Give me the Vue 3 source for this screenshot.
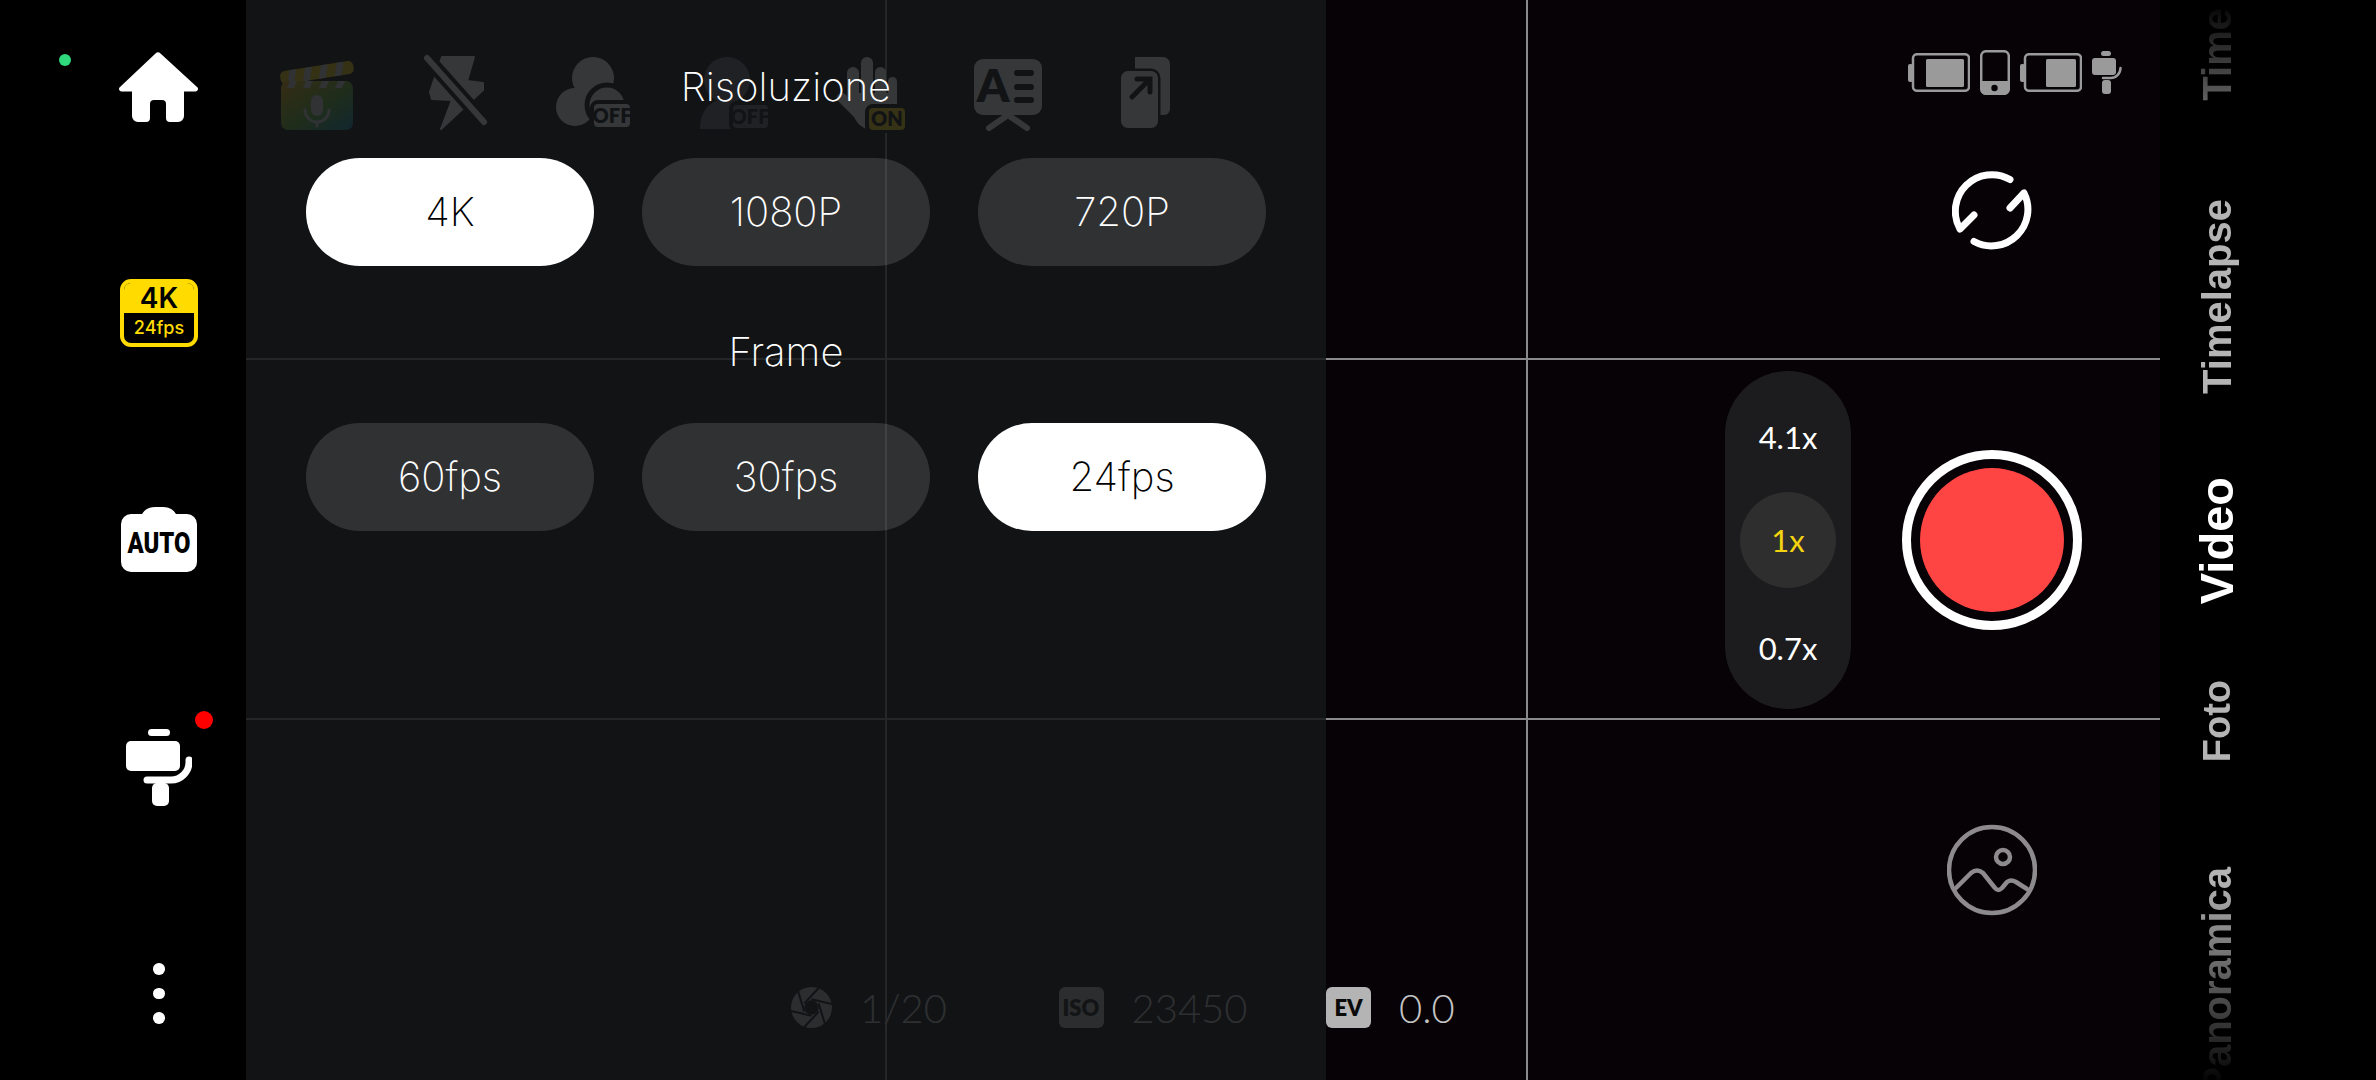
<template>
	<div class="camera">
		<aside class="left-rail">
			<span class="live-dot"></span>
			<svg class="home-icon" viewBox="0 0 80 70" width="80" height="70">
				<path fill="#fff" d="M36.5 1.5a3.5 3.5 0 0 1 5 0L78 35a2.5 2.5 0 0 1-1.6 4.5H65V64a6 6 0 0 1-6 6H51a4 4 0 0 1-4-4V52a4 4 0 0 0-4-4H35a4 4 0 0 0-4 4V66a4 4 0 0 1-4 4H19a6 6 0 0 1-6-6V39.5H2.6A2.5 2.5 0 0 1 1 35Z" />
			</svg>
			<div class="res-badge">
				<span class="res-badge-top">4K</span>
				<span class="res-badge-bottom">24fps</span>
			</div>
			<svg class="auto-icon" viewBox="0 0 76 68" width="76" height="68">
				<path fill="#fff" d="M20 12Q24 3 34 3H42Q52 3 56 12Z" />
				<rect x="0" y="10" width="76" height="58" rx="10" fill="#fff" />
				<text x="38" y="49" text-anchor="middle" textLength="63" lengthAdjust="spacingAndGlyphs" class="auto-text">AUTO</text>
			</svg>
			<div class="gimbal-wrap">
				<svg viewBox="0 0 66 77" width="66" height="77" fill="#fff">
					<rect x="22" y="0" width="22" height="7" rx="3.5" />
					<rect x="0" y="12" width="54" height="30" rx="5" />
					<path d="M63 31v2a18 18 0 0 1-18 18H21" fill="none" stroke="#fff" stroke-width="7" stroke-linecap="round" />
					<rect x="26" y="54" width="17" height="23" rx="5" />
				</svg>
				<span class="gimbal-dot"></span>
			</div>
			<div class="more-dots">
				<span></span><span></span><span></span>
			</div>
		</aside>

		<main class="viewfinder">
			<div class="thirds">
				<div v-for="n in 9" :key="n" class="third"></div>
			</div>

			<div class="stage">
				<div class="quick-row">
					<svg viewBox="0 0 80 80" width="80" height="80">
						<defs>
							<linearGradient id="clapFill" x1="0" y1="0" x2="1" y2="1">
								<stop offset="0" stop-color="#ffb300" />
								<stop offset="0.55" stop-color="#5fb52a" />
								<stop offset="1" stop-color="#0a8fb8" />
							</linearGradient>
						</defs>
						<g transform="rotate(-9 41 20)">
							<rect x="4" y="13" width="74" height="13" rx="5" fill="#ffd000" />
							<path v-for="x in [14, 30, 46, 62]" :key="x" :d="`M${x} 13h7l-4 13h-7Z`" fill="#d8d8d8" />
						</g>
						<rect x="5" y="28" width="72" height="49" rx="7" fill="url(#clapFill)" />
						<path v-for="x in [14, 30, 46, 62]" :key="x" :d="`M${x} 28h7l-3 7h-7Z`" fill="#d8d8d8" />
						<rect x="35" y="42" width="12" height="21" rx="6" fill="#d8d8d8" />
						<path d="M29 57a12 12 0 0 0 24 0M41 69v4" fill="none" stroke="#d8d8d8" stroke-width="3" stroke-linecap="round" />
					</svg>

					<svg viewBox="0 0 80 80" width="80" height="80">
						<path fill="#fff" d="M28 4H60L53 28L69 30V37L27 76L38 47L18 46L16 39Z" stroke="#fff" stroke-width="2" stroke-linejoin="round" />
						<path d="M13 5L70 69" stroke="#060206" stroke-width="14" />
						<path d="M13 5L70 69" stroke="#fff" stroke-width="6" stroke-linecap="round" />
					</svg>

					<svg viewBox="0 0 80 80" width="80" height="80" fill="#fff">
						<circle cx="41" cy="25" r="21" />
						<circle cx="23" cy="54" r="19" />
						<circle cx="55" cy="52" r="20" stroke="#060206" stroke-width="5" />
						<rect x="40" y="49" width="40" height="27" rx="6" stroke="#060206" stroke-width="4" />
						<text x="60" y="70" text-anchor="middle" class="tag-text">OFF</text>
					</svg>

					<svg class="dim-icon" viewBox="0 0 80 80" width="80" height="80" fill="#fff">
						<circle cx="37" cy="27" r="23" />
						<path d="M10 76C10 56 22 46 37 46C52 46 64 56 64 76Z" />
						<rect x="41" y="50" width="39" height="27" rx="6" stroke="#060206" stroke-width="4" />
						<text x="60" y="71" text-anchor="middle" class="tag-text">OFF</text>
					</svg>

					<svg viewBox="0 0 80 80" width="80" height="80" fill="#fff">
						<rect x="19" y="14" width="12" height="38" rx="6" />
						<rect x="33" y="4" width="12" height="48" rx="6" />
						<rect x="47" y="14" width="11" height="38" rx="5.5" />
						<rect x="60" y="24" width="9" height="30" rx="4.5" />
						<path d="M19 40H69V56C69 68 60 77 46 77C36 77 30 72 26 64L9 47C7 42 13 38 17 41L19 43Z" />
						<rect x="39" y="53" width="40" height="26" rx="6" fill="#ffd800" stroke="#060206" stroke-width="4" />
						<text x="59" y="73" text-anchor="middle" class="tag-text">ON</text>
					</svg>

					<svg viewBox="0 0 80 80" width="80" height="80">
						<rect x="8" y="6" width="68" height="56" rx="9" fill="#fff" />
						<text x="27" y="49" text-anchor="middle" class="board-letter">A</text>
						<path d="M51 20H65M51 34H65M51 47H65" stroke="#060206" stroke-width="6" stroke-linecap="round" />
						<path d="M42 62L23 75M42 62L61 75" stroke="#fff" stroke-width="6" stroke-linecap="round" />
					</svg>

					<svg viewBox="0 0 80 80" width="80" height="80">
						<path d="M31 4H59a7 7 0 0 1 7 7V56a6 6 0 0 1-6 6H31Z" fill="#fff" />
						<rect x="17" y="18" width="37" height="57" rx="7" fill="#fff" stroke="#060206" stroke-width="5" paint-order="stroke" />
						<path d="M28 44L45 27M33 26H46V39" fill="none" stroke="#060206" stroke-width="5" stroke-linecap="round" />
					</svg>
				</div>

				<div class="exposure-row">
					<div class="exposure-item">
						<svg viewBox="0 0 40 40" width="41" height="41">
							<circle cx="20" cy="20" r="20" fill="#b4b4b4" />
							<line v-for="a in [0, 60, 120, 180, 240, 300]" :key="a" x1="13" y1="16" x2="27" y2="1" stroke="#060206" stroke-width="2" :transform="`rotate(${a} 20 20)`" />
							<circle cx="20" cy="20" r="7" fill="#060206" />
						</svg>
						<span class="exposure-value">1/20</span>
					</div>
					<div class="exposure-item">
						<span class="exposure-tag">ISO</span>
						<span class="exposure-value">23450</span>
					</div>
					<div class="exposure-item">
						<span class="exposure-tag">EV</span>
						<span class="exposure-value">0.0</span>
					</div>
				</div>
			</div>

			<div class="zoom-pill">
				<span v-for="z in zooms" :key="z" class="zoom-step" :class="{ active: z === '1x' }">{{ z }}</span>
			</div>

			<div class="capture-col">
				<div class="status-row">
					<svg viewBox="0 0 62 39" width="62" height="39">
						<rect x="0" y="11" width="5" height="18" rx="2" fill="#9a9a9a" />
						<rect x="5" y="1.2" width="56" height="36.6" rx="4" fill="none" stroke="#9a9a9a" stroke-width="2.5" />
						<rect x="18" y="6" width="38" height="28" rx="1.5" fill="#9a9a9a" />
					</svg>
					<svg viewBox="0 0 30 45" width="30" height="45">
						<rect x="1.2" y="1.2" width="27.6" height="42.6" rx="5" fill="none" stroke="#9a9a9a" stroke-width="2.5" />
						<path d="M1 31H29V40a5 5 0 0 1-5 5H6a5 5 0 0 1-5-5Z" fill="#9a9a9a" />
						<circle cx="14.5" cy="38" r="3.2" fill="#060206" />
					</svg>
					<svg viewBox="0 0 62 39" width="62" height="39">
						<rect x="0" y="11" width="5" height="18" rx="2" fill="#9a9a9a" />
						<rect x="5" y="1.2" width="56" height="36.6" rx="4" fill="none" stroke="#9a9a9a" stroke-width="2.5" />
						<rect x="26" y="6" width="30" height="28" rx="1.5" fill="#9a9a9a" />
					</svg>
					<svg viewBox="0 0 30 43" width="30" height="43" fill="#9a9a9a">
						<rect x="9" y="0" width="10" height="5" rx="2.5" />
						<rect x="0" y="7" width="24" height="17" rx="3" />
						<path d="M28.5 17a10 10 0 0 1-10 10H11" fill="none" stroke="#9a9a9a" stroke-width="2.5" stroke-linecap="round" />
						<rect x="10" y="29" width="9" height="14" rx="3" />
					</svg>
				</div>

				<svg class="switch-icon" viewBox="0 0 80 80" width="80" height="80" fill="none" stroke="#fff" stroke-width="7" stroke-linecap="round" stroke-linejoin="round">
					<path d="M58 8.5A36.5 36.5 0 0 0 8 58L22 44" />
					<path d="M22 70.5A36.5 36.5 0 0 0 72 22L58 37" />
				</svg>

				<div class="record-btn"><span class="record-dot"></span></div>

				<svg class="gallery-icon" viewBox="0 0 90 92" width="90" height="92" fill="none" stroke="#8e8b8e" stroke-width="4.5" stroke-linecap="round" stroke-linejoin="round">
					<circle cx="45" cy="46" r="43" />
					<circle cx="56" cy="33" r="7" />
					<path d="M9 64L24 49Q30 44 36 49L48 64Q51 68 55 64L60 58Q64 55 69 58L80 65" />
				</svg>
			</div>

			<section class="settings-panel">
				<h2 class="panel-title first">Risoluzione</h2>
				<div class="pill-row">
					<span v-for="r in resolutions" :key="r" class="pill" :class="{ selected: r === '4K' }">{{ r }}</span>
				</div>
				<h2 class="panel-title">Frame</h2>
				<div class="pill-row">
					<span v-for="f in frames" :key="f" class="pill" :class="{ selected: f === '24fps' }">{{ f }}</span>
				</div>
			</section>
		</main>

		<nav class="mode-rail">
			<span
				v-for="m in modes"
				:key="m.label"
				class="mode"
				:class="{ current: m.label === 'Video' }"
				:style="{ marginTop: m.gap + 'px', fontSize: m.size + 'px' }"
			>{{ m.label }}</span>
		</nav>
	</div>
</template>

<script setup>
const zooms = ["4.1x", "1x", "0.7x"];
const resolutions = ["4K", "1080P", "720P"];
const frames = ["60fps", "30fps", "24fps"];

// the wheel is not evenly spaced, so every label keeps its own gap
const modes = [
	{ label: "Time", gap: 8, size: 40 },
	{ label: "Timelapse", gap: 98, size: 40 },
	{ label: "Video", gap: 83, size: 47 },
	{ label: "Foto", gap: 76, size: 38 },
	{ label: "Panoramica", gap: 105, size: 40 },
];
</script>

<style>
html, body {
	margin: 0;
	background: #000;
}
</style>

<style scoped>
.camera {
	display: flex;
	width: 2376px;
	height: 1080px;
	overflow: hidden;
	background: #000;
	color: #fff;
	font-family: Lato, "Liberation Sans", sans-serif;
}

.left-rail {
	position: relative;
	box-sizing: border-box;
	flex: 0 0 246px;
	display: flex;
	flex-direction: column;
	align-items: center;
	gap: 157px;
	padding: 52px 0 0 72px;
}

.live-dot {
	position: absolute;
	left: 59px;
	top: 54px;
	width: 12px;
	height: 12px;
	border-radius: 50%;
	background: #2fd97c;
}

.res-badge {
	box-sizing: border-box;
	display: flex;
	flex-direction: column;
	width: 78px;
	height: 68px;
	border: 4px solid #ffdb00;
	border-radius: 11px;
	background: #000;
	text-align: center;
	overflow: hidden;
}

.res-badge-top {
	height: 30px;
	background: #ffdb00;
	color: #000;
	font: 600 28px/30px Inter, sans-serif;
}

.res-badge-bottom {
	color: #ffdb00;
	font: 500 18px/30px Inter, sans-serif;
}

.auto-text {
	fill: #000;
	font: 900 29px Roboto, sans-serif;
}

.gimbal-wrap {
	position: relative;
	height: 77px;
}

.gimbal-dot {
	position: absolute;
	left: 69px;
	top: -18px;
	width: 18px;
	height: 18px;
	border-radius: 50%;
	background: #f00;
}

.more-dots {
	display: flex;
	flex-direction: column;
	gap: 13px;
}

.more-dots span {
	width: 11.5px;
	height: 11.5px;
	border-radius: 50%;
	background: #fff;
}

.viewfinder {
	position: relative;
	flex: 1;
	display: flex;
	background: #060206;
}

.thirds {
	position: absolute;
	inset: 0;
	display: grid;
	grid-template-columns: 641px 641px 1fr;
	grid-template-rows: repeat(3, 1fr);
}

.third {
	border-right: 2px solid #8a8a8a;
	border-bottom: 2px solid #8a8a8a;
}

.third:nth-child(3n) {
	border-right: 0;
}

.third:nth-child(n+7) {
	border-bottom: 0;
}

.stage {
	position: relative;
	box-sizing: border-box;
	flex: 0 0 1479px;
	display: flex;
	flex-direction: column;
	justify-content: space-between;
	padding: 53px 0 52px 30px;
}

.quick-row {
	display: flex;
	gap: 58px;
}

.dim-icon {
	opacity: 0.4;
}

.tag-text {
	fill: #060206;
	font: 800 20px Lato, sans-serif;
}

.board-letter {
	fill: #060206;
	font: 800 46px Lato, sans-serif;
}

.exposure-row {
	display: flex;
	padding-left: 515px;
}

.exposure-item {
	flex: 0 0 267.5px;
	display: flex;
	align-items: center;
	gap: 28px;
	height: 41px;
}

.exposure-value {
	color: #c4c4c4;
	font-size: 40px;
	font-weight: 300;
}

.exposure-tag {
	width: 45px;
	height: 41px;
	border-radius: 6px;
	background: #b4b4b4;
	color: #0a0a0a;
	font: 800 22px/41px Lato, sans-serif;
	text-align: center;
}

.zoom-pill {
	position: relative;
	align-self: center;
	box-sizing: border-box;
	display: flex;
	flex-direction: column;
	align-items: center;
	justify-content: space-between;
	width: 126px;
	height: 338px;
	padding: 18px 0 13px;
	border-radius: 63px;
	background: #1c1c1e;
}

.zoom-step {
	display: flex;
	align-items: center;
	justify-content: center;
	width: 96px;
	height: 96px;
	border-radius: 50%;
	font-size: 31px;
	font-weight: 400;
}

.zoom-step.active {
	margin-top: -5px;
	background: #2e2e2e;
	color: #f5d40f;
}

.capture-col {
	position: relative;
	display: flex;
	flex-direction: column;
	align-items: center;
	width: 180px;
	margin-left: 51px;
	padding-top: 50px;
}

.status-row {
	display: flex;
	align-items: center;
	gap: 10px;
	width: 214px;
	height: 45px;
	margin-left: 46px;
	flex-shrink: 0;
}

.switch-icon {
	margin-top: 76px;
}

.record-btn {
	box-sizing: border-box;
	display: flex;
	align-items: center;
	justify-content: center;
	width: 180px;
	height: 180px;
	margin-top: 199px;
	border: 9px solid #fff;
	border-radius: 50%;
	flex-shrink: 0;
}

.record-dot {
	width: 144px;
	height: 144px;
	border-radius: 50%;
	background: #f44;
}

.gallery-icon {
	margin-top: 194px;
}

.settings-panel {
	position: absolute;
	left: 0;
	top: 0;
	bottom: 0;
	box-sizing: border-box;
	width: 1080px;
	padding: 1px 60px 0;
	background: rgba(20, 22, 24, 0.86);
	font-family: Inter, Lato, sans-serif;
}

.panel-title {
	margin: 56px 0 41px;
	font-size: 40px;
	font-weight: 250;
	line-height: 60px;
	text-align: center;
}

.pill-row {
	display: flex;
	gap: 48px;
}

.pill {
	flex: 1;
	height: 108px;
	border-radius: 54px;
	background: rgba(255, 255, 255, 0.13);
	font-size: 40px;
	font-weight: 250;
	line-height: 108px;
	text-align: center;
}

.pill.selected {
	background: #fff;
	color: #000;
}

.mode-rail {
	flex: 0 0 216px;
	display: flex;
	flex-direction: column;
	align-items: flex-start;
	padding-left: 27px;
	box-sizing: border-box;
	height: 1080px;
	-webkit-mask-image: linear-gradient(to bottom, transparent 0, #000 190px, #000 880px, transparent 1085px);
	mask-image: linear-gradient(to bottom, transparent 0, #000 190px, #000 880px, transparent 1085px);
}

.mode {
	flex-shrink: 0;
	writing-mode: vertical-rl;
	transform: rotate(180deg);
	color: #b4b4b4;
	font-family: "Liberation Sans", Arial, sans-serif;
	font-weight: 700;
	line-height: 60px;
	white-space: nowrap;
}

.mode.current {
	color: #fff;
}
</style>
